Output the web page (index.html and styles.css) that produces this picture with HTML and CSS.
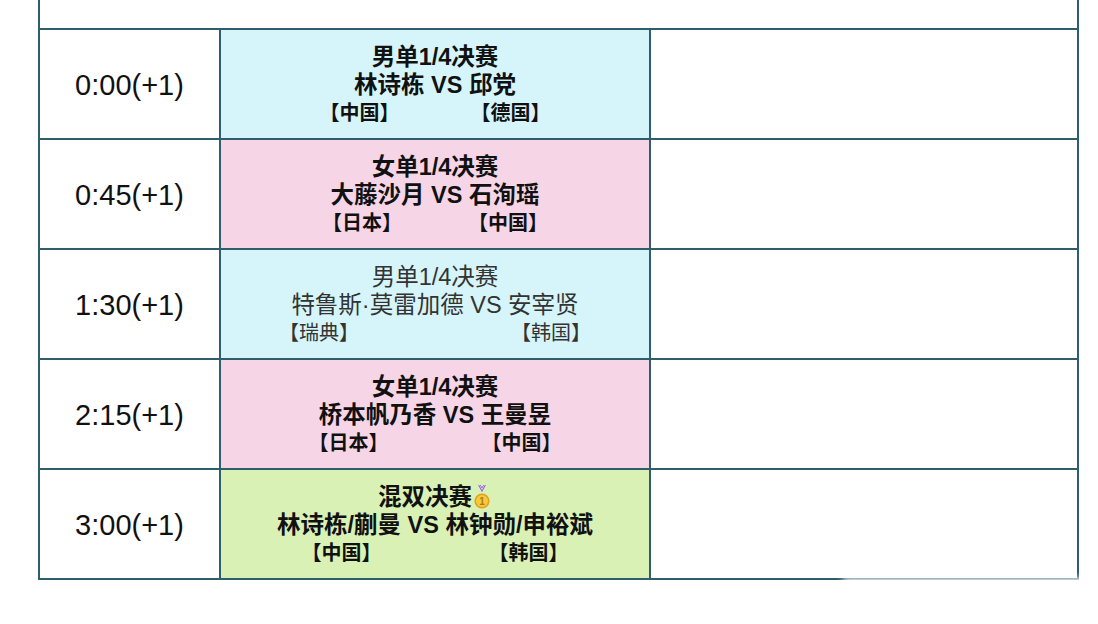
FILE: index.html
```html
<!DOCTYPE html>
<html lang="zh-CN">
<head>
<meta charset="utf-8">
<title>赛程</title>
<link rel="stylesheet" href="styles.css">
</head>
<body>
<div class="page">
  <div class="schedule">
    <div class="cell top"></div>

    <div class="cell time">0:00(+1)</div>
    <div class="cell match blue bold">
      <div class="line">男单1/4决赛</div>
      <div class="line names">林诗栋 VS 邱党</div>
      <div class="line countries"><span>【中国】</span><span class="gap g71"></span><span>【德国】</span></div>
    </div>
    <div class="cell empty"></div>

    <div class="cell time">0:45(+1)</div>
    <div class="cell match pink bold">
      <div class="line">女单1/4决赛</div>
      <div class="line names">大藤沙月 VS 石洵瑶</div>
      <div class="line countries"><span>【日本】</span><span class="gap g66"></span><span>【中国】</span></div>
    </div>
    <div class="cell empty"></div>

    <div class="cell time">1:30(+1)</div>
    <div class="cell match blue regular">
      <div class="line">男单1/4决赛</div>
      <div class="line names">特鲁斯·莫雷加德 VS 安宰贤</div>
      <div class="line countries"><span>【瑞典】</span><span class="gap g152"></span><span>【韩国】</span></div>
    </div>
    <div class="cell empty"></div>

    <div class="cell time">2:15(+1)</div>
    <div class="cell match pink bold">
      <div class="line">女单1/4决赛</div>
      <div class="line names">桥本帆乃香 VS 王曼昱</div>
      <div class="line countries"><span>【日本】</span><span class="gap g93"></span><span>【中国】</span></div>
    </div>
    <div class="cell empty"></div>

    <div class="cell time">3:00(+1)</div>
    <div class="cell match green bold">
      <div class="line title-medal">混双决赛<svg class="medal" viewBox="0 0 20 24" width="20" height="24" aria-hidden="true">
          <path d="M5 0 L10 9 L15 0 Z" fill="#e6e6ee"/>
          <path d="M6.6 0 L10 6.2 L13.4 0" fill="none" stroke="#8a6fb8" stroke-width="1.1"/>
          <path d="M8.3 0 L10 3.1 L11.7 0" fill="none" stroke="#8a6fb8" stroke-width="0.9"/>
          <circle cx="10" cy="16" r="7.6" fill="#e3a11a"/>
          <circle cx="10" cy="16" r="6" fill="#f7c941"/>
          <text x="10" y="19.8" text-anchor="middle" font-size="10" font-weight="bold" font-family="Liberation Sans, sans-serif" fill="#b47a0a">1</text>
        </svg></div>
      <div class="line names">林诗栋/蒯曼 VS 林钟勋/申裕斌</div>
      <div class="line countries"><span>【中国】</span><span class="gap g107"></span><span>【韩国】</span></div>
    </div>
    <div class="cell empty"></div>
  </div>
  <div class="fade"></div>
</div>
</body>
</html>
```

FILE: styles.css
```css
html, body {
  margin: 0;
  padding: 0;
  background: #ffffff;
}

.page {
  position: relative;
  width: 1098px;
  height: 624px;
  overflow: hidden;
}

.schedule {
  margin-left: 38px;
  width: 1041px;
  box-sizing: border-box;
  padding: 0 2px 2px 2px;
  background: #2d5e6a;
  display: grid;
  grid-template-columns: 179px 428px 426px;
  grid-template-rows: 28px repeat(5, 108px);
  gap: 2px;
}

.cell {
  background: #ffffff;
}

.top {
  grid-column: 1 / 4;
}

.time {
  display: flex;
  align-items: center;
  justify-content: center;
  font-family: "Liberation Sans", Arial, sans-serif;
  font-size: 29px;
  color: #111111;
  padding-top: 2px;
}

.match {
  display: flex;
  flex-direction: column;
  justify-content: center;
  align-items: center;
  font-family: "Liberation Sans", "Noto Sans CJK SC", sans-serif;
  color: #111111;
  padding-top: 1px;
}

.blue { background: #d6f5fa; }
.pink { background: #f6d6e6; }
.green { background: #d9f1b4; }

.bold { font-weight: bold; }
.regular { font-weight: normal; color: #333333; }

.line {
  font-size: 23.5px;
  line-height: 28px;
  white-space: nowrap;
}

.names {
  font-size: 23.5px;
}

.countries {
  display: flex;
  justify-content: center;
  font-size: 20px;
  line-height: 28px;
}

.gap { display: inline-block; }
.g71 { width: 71px; }
.g66 { width: 66px; }
.g152 { width: 152px; }
.g93 { width: 93px; }
.g107 { width: 107px; }

.title-medal {
  display: flex;
  align-items: flex-end;
}

.medal {
  display: block;
  margin-left: 0;
  margin-bottom: 2px;
}

.fade {
  position: absolute;
  left: 846px;
  top: 581px;
  width: 250px;
  height: 14px;
  background: #ffffff;
  box-shadow: 0 0 6px 3px #ffffff;
}
```
